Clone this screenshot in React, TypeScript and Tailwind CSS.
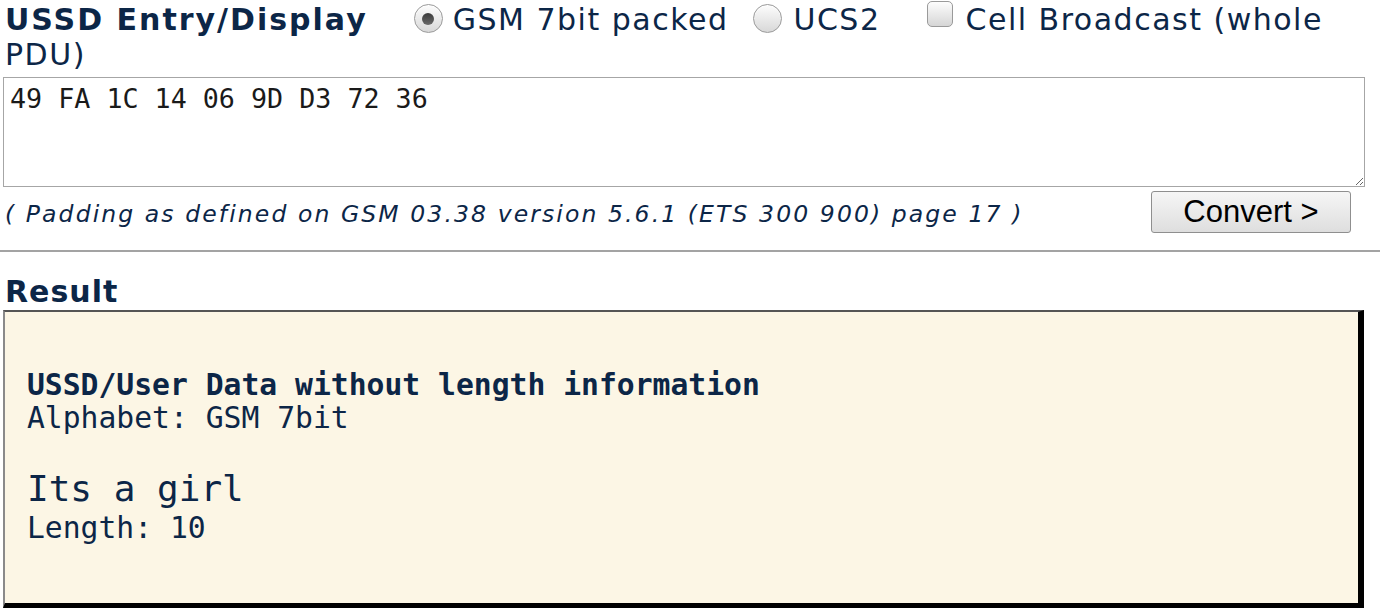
import React from "react";

const navy = "text-[#0c2647]";

function Radio({ checked }: { checked?: boolean }) {
  return (
    <span className="inline-flex items-center justify-center w-[29px] h-[29px] rounded-full border border-[#9a9a9a] bg-gradient-to-b from-[#fdfdfd] to-[#d8d8d8] shadow-[inset_0_1px_1px_rgba(255,255,255,0.9)] align-middle">
      {checked ? (
        <span className="block w-[12px] h-[12px] rounded-full bg-gradient-to-b from-[#3a3a3a] to-[#6a6a6a]" />
      ) : null}
    </span>
  );
}

function Checkbox() {
  return (
    <span className="inline-block w-[26px] h-[26px] rounded-[5px] border border-[#9a9a9a] bg-gradient-to-b from-[#fdfdfd] to-[#d6d6d6] align-middle" />
  );
}

export default function App() {
  return (
    <div className="bg-white w-[1382px] h-[610px] overflow-hidden">
      <div
        className={`${navy} pl-[5px] text-[30px] leading-[35px] pt-[2px] tracking-[1.5px]`}
        style={{ fontFamily: '"DejaVu Sans", Verdana, sans-serif' }}
      >
        <div className="flex items-center whitespace-nowrap">
          <span className="font-bold tracking-[2px]">USSD Entry/Display</span>
          <span className="ml-[46px] mr-[10px] flex items-center -mt-[2px]">
            <Radio checked />
          </span>
          <span>GSM 7bit packed</span>
          <span className="ml-[25px] mr-[11px] flex items-center -mt-[2px]">
            <Radio />
          </span>
          <span>UCS2</span>
          <span className="ml-[46px] mr-[13px] flex items-center -mt-[12px]">
            <Checkbox />
          </span>
          <span>Cell Broadcast (whole</span>
        </div>
        <div>PDU)</div>
      </div>

      <div className="pl-[3px] mt-[5px]">
        <textarea
          defaultValue="49 FA 1C 14 06 9D D3 72 36"
          spellCheck={false}
          className="block w-[1362px] h-[110px] border border-[#a6a6a6] text-[26.7px] leading-[30px] px-[6px] py-[6px] text-[#1a1a1a] outline-none resize-y"
          style={{ fontFamily: '"DejaVu Sans Mono", Consolas, monospace' }}
        />
      </div>

      <div className="flex items-start justify-between pl-[5px] pr-[31px] mt-[4px]">
        <div
          className={`${navy} italic text-[23.5px] leading-[30px] mt-[8px] tracking-[2.1px] whitespace-nowrap`}
          style={{ fontFamily: '"DejaVu Sans", Verdana, sans-serif' }}
        >
          ( Padding as defined on GSM 03.38 version 5.6.1 (ETS 300 900) page 17 )
        </div>
        <button
          className="w-[200px] h-[42px] shrink-0 rounded-[3px] border border-[#8f8f8f] bg-gradient-to-b from-[#f6f6f6] to-[#dedede] text-[31px] leading-[40px] text-black"
          style={{ fontFamily: '"Liberation Sans", Arial, sans-serif' }}
        >
          Convert &gt;
        </button>
      </div>

      <div className="mt-[17px] h-[2px] w-[1380px] bg-[#a3a3a3]" />

      <div
        className={`${navy} font-bold text-[30px] leading-[36px] pl-[5px] mt-[22px] tracking-[1px]`}
        style={{ fontFamily: '"DejaVu Sans", Verdana, sans-serif' }}
      >
        Result
      </div>

      <div className="ml-[3px] w-[1361px] h-[298px] bg-[#fcf6e5] border-l-2 border-l-[#8a8a8a] border-t-2 border-t-[#555] border-r-[6px] border-r-black border-b-[5px] border-b-black">
        <div
          className={`${navy} pl-[22px] pt-[56px] text-[29.7px] leading-[33px]`}
          style={{ fontFamily: '"DejaVu Sans Mono", Consolas, monospace' }}
        >
          <div className="font-bold">USSD/User Data without length information</div>
          <div>Alphabet: GSM 7bit</div>
          <div className="h-[33px]" />
          <div className="text-[36px] leading-[44px]">Its a girl</div>
          <div>Length: 10</div>
        </div>
      </div>
    </div>
  );
}
